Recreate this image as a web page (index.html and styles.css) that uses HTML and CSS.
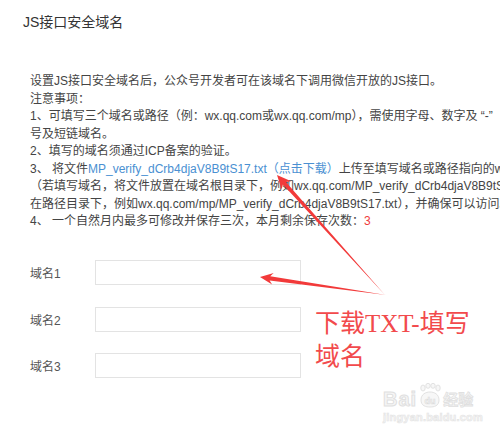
FILE: index.html
```html
<html>
<head>
  <meta http-equiv="Content-Type" content="text/html; charset=UTF-8"/>
  <title>JS接口安全域名</title>
  <link rel="stylesheet" href="styles.css">
</head>

<body>
<div class="page">

<h2 class="title">JS接口安全域名</h2>

<div class="desc">
  <div class="line">设置JS接口安全域名后，公众号开发者可在该域名下调用微信开放的JS接口。</div>
  <div class="line">注意事项：</div>
  <div class="line">1、可填写三个域名或路径（例：wx.qq.com或wx.qq.com/mp），需使用字母、数字及 “-”</div>
  <div class="line">号及短链域名。</div>
  <div class="line">2、填写的域名须通过ICP备案的验证。</div>
  <div class="line">3、 将文件<a class="link" href="#">MP_verify_dCrb4djaV8B9tS17.txt（点击下载）</a>上传至填写域名或路径指向的web服务器（或虚拟主机）的目录</div>
  <div class="line">（若填写域名，将文件放置在域名根目录下，例如wx.qq.com/MP_verify_dCrb4djaV8B9tS17.txt；若填写路径</div>
  <div class="line">在路径目录下，例如wx.qq.com/mp/MP_verify_dCrb4djaV8B9tS17.txt），并确保可以访问。</div>
  <div class="line">4、 一个自然月内最多可修改并保存三次，本月剩余保存次数：<span class="count">3</span></div>
</div>

<div class="form">
  <div class="row"><label class="lbl">域名1</label><input class="field" type="text"></div>
  <div class="row"><label class="lbl">域名2</label><input class="field" type="text"></div>
  <div class="row"><label class="lbl">域名3</label><input class="field" type="text"></div>
</div>

<!-- annotation drawn over the screenshot -->
<svg class="arrows" width="500" height="433" viewBox="0 0 500 433">
  <polygon fill="#f23a3a" points="260,277 273.7,273 270.2,276.3 386,295 269.6,280.6 272.1,284.5"/>
  <polygon fill="#f23a3a" points="277,175 291.2,181.2 285.9,182 385,295 282.9,184.6 281.6,189.6"/>
</svg>
<div class="note">下载TXT-填写<br>域名</div>

<div class="mark">
  <div class="mark-top">
    <span class="bai">Bai</span>
    <svg class="paw" width="24" height="26" viewBox="0 0 24 26">
      <g fill="#f7f7f7" stroke="#e2e2e2" stroke-width="1">
        <ellipse cx="5" cy="5" rx="2.2" ry="3"/>
        <ellipse cx="10" cy="2.8" rx="2.2" ry="2.5"/>
        <ellipse cx="15" cy="2.8" rx="2.2" ry="2.5"/>
        <ellipse cx="20" cy="5" rx="2.2" ry="3"/>
        <path d="M3 17 C3 11 8 9 12 9 C16 9 21 11 21 17 C21 23 16 24 12 24 C8 24 3 23 3 17 Z"/>
      </g>
      <text x="12" y="21" text-anchor="middle" class="paw-du">du</text>
    </svg>
    <span class="jy">经验</span>
  </div>
  <div class="mark-url">jingyan.baidu.com</div>
</div>

</div>
</body>
</html>
```

FILE: styles.css
```css
body {margin: 0; background: #ffffff; overflow: hidden}
.page {position: relative; width: 500px; height: 433px; overflow: hidden; font-family: "Liberation Sans", "Noto Sans CJK SC", sans-serif; color: #444444}

.title {margin: 0; padding: 12px 0 0 23px; font-size: 14px; line-height: 20px; font-weight: normal; color: #333333}

.desc {margin-top: 41px; padding-left: 30px; font-size: 12px; line-height: 17.5px}
.line {white-space: nowrap}
.link {color: #4a90d2; text-decoration: none}
.count {color: #f03c3c}

.form {margin-top: 29.5px; padding-left: 30px; display: flex; flex-direction: column; gap: 21.5px}
.row {display: flex; align-items: center; height: 25px}
.lbl {width: 65px; font-size: 12px; color: #555555}
.field {box-sizing: border-box; width: 206px; height: 25px; margin: 0; border: 1px solid #e3e3e3; background: #ffffff; outline: none}

.arrows {position: absolute; left: 0; top: 0}
.note {position: absolute; left: 315px; top: 307px; font-family: "Liberation Serif", "Noto Sans CJK SC", serif; font-size: 25px; line-height: 33px; color: #f24a4c; white-space: nowrap}

.mark {position: absolute; left: 383px; top: 383px; color: #f6f6f6}
.mark-top {display: flex; align-items: flex-end; gap: 1px}
.bai {font: bold 20px "Liberation Sans", sans-serif; line-height: 20px; -webkit-text-stroke: 1px #e0e0e0; letter-spacing: 1px}
.paw {display: block}
.paw-du {font: bold 9px "Liberation Sans", sans-serif; fill: #f7f7f7; stroke: #dcdcdc; stroke-width: 0.6}
.jy {font: bold 15px "Noto Sans CJK SC", sans-serif; line-height: 20px; -webkit-text-stroke: 0.8px #e0e0e0}
.mark-url {margin-top: 2px; font: bold 11px "Liberation Sans", sans-serif; -webkit-text-stroke: 0.6px #e4e4e4; letter-spacing: 0.2px}
```
